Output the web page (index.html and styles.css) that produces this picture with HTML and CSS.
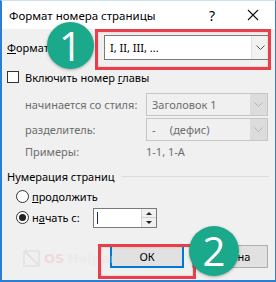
FILE: index.html
```html
<!DOCTYPE html>
<html lang="ru">
<head>
  <meta charset="UTF-8" />
  <title>Формат номера страницы</title>
  <link rel="stylesheet" href="styles.css">
</head>
<body>
  <div class="dialog">
    <div class="titlebar">
      <span class="title">Формат номера страницы</span>
      <span class="help">?</span>
      <svg class="close" width="12" height="12" viewBox="0 0 12 12">
        <path d="M1 1 L11 11 M11 1 L1 11" stroke="#111" stroke-width="1.1" fill="none"/>
      </svg>
    </div>

    <div class="content">
      <div class="format-row">
        <span class="label"><u>Ф</u>ормат:</span>
        <div class="combo">
          <span class="combo-text">I, II, III, ...</span>
          <span class="arrow">
            <svg width="9" height="6" viewBox="0 0 9 6"><path d="M0.5 0.5 L4.5 4.5 L8.5 0.5" stroke="#555" fill="none"/></svg>
          </span>
        </div>
      </div>

      <div class="check-row">
        <span class="check"></span>
        <span>Включить номер <u>г</u>лавы</span>
      </div>

      <div class="chapter">
        <span>начинается со стиля:</span>
        <div class="combo disabled">
          <span class="combo-text">Заголовок 1</span>
          <span class="arrow">
            <svg width="9" height="6" viewBox="0 0 9 6"><path d="M0.5 0.5 L4.5 4.5 L8.5 0.5" stroke="#b5b5b5" fill="none"/></svg>
          </span>
        </div>
        <span>разделитель:</span>
        <div class="combo disabled">
          <span class="combo-text">-&nbsp;&nbsp;&nbsp;&nbsp;&nbsp;(дефис)</span>
          <span class="arrow">
            <svg width="9" height="6" viewBox="0 0 9 6"><path d="M0.5 0.5 L4.5 4.5 L8.5 0.5" stroke="#b5b5b5" fill="none"/></svg>
          </span>
        </div>
        <span>Примеры:</span>
        <span class="example">1-1, 1-А</span>
      </div>

      <div class="group-title">
        <span>Нумерация страниц</span>
        <span class="group-line"></span>
      </div>

      <div class="radio-row">
        <span class="radio"></span>
        <span><u>п</u>родолжить</span>
      </div>
      <div class="radio-row start">
        <span class="radio checked"></span>
        <span class="start-label">н<u>а</u>чать с:</span>
        <div class="spin">
          <span class="caret"></span>
          <span class="spin-buttons">
            <span class="spin-up"></span>
            <span class="spin-down"></span>
          </span>
        </div>
      </div>

      <div class="buttons">
        <div class="btn default">ОК</div>
        <div class="btn">Отмена</div>
      </div>
    </div>

    <div class="watermark">
      <span class="wm-box"></span>
      <span class="wm-os">OS</span><span class="wm-helper">Helper</span>
    </div>

    <div class="highlight hl-format"></div>
    <div class="highlight hl-ok"></div>
    <div class="badge badge-1">1</div>
    <div class="badge badge-2">2</div>
  </div>
</body>
</html>
```

FILE: styles.css
```css
* {
  margin: 0;
  padding: 0;
  box-sizing: border-box;
}

body {
  font-family: 'Noto Sans', 'Liberation Sans', sans-serif;
  font-size: 11px;
  color: #000;
  background: #fff;
}

.dialog {
  position: relative;
  width: 276px;
  height: 282px;
  background: #f0f0f0;
  border: 1px solid #2a7fd4;
  border-left-width: 2px;
  border-bottom-width: 2px;
  border-top-color: #cfe0f2;
  overflow: hidden;
}

.titlebar {
  height: 28px;
  background: #fff;
  display: flex;
  align-items: center;
  padding-left: 7px;
}

.title {
  flex: 1;
  font-size: 11.5px;
}

.help {
  font-size: 14px;
  margin-right: 32px;
}

.close {
  margin-right: 16px;
}

.content {
  padding: 6px 6px 0 5px;
}

.format-row {
  display: flex;
  align-items: center;
  height: 25px;
}

.label {
  flex: 1;
  white-space: nowrap;
}

.combo {
  display: flex;
  align-items: center;
  width: 165px;
  height: 25px;
  background: #fff;
  border: 1px solid #7a7a7a;
  padding-left: 5px;
}

.combo-text {
  flex: 1;
  white-space: nowrap;
}

.arrow {
  width: 17px;
  height: 100%;
  display: flex;
  align-items: center;
  justify-content: center;
  background: #f2f2f2;
  border-left: 1px solid #e0e0e0;
}

.check-row {
  display: flex;
  align-items: center;
  margin-top: 10px;
  height: 14px;
}

.check {
  width: 12px;
  height: 12px;
  border: 1px solid #333;
  background: #fff;
  margin-right: 6px;
}

.chapter {
  display: grid;
  grid-template-columns: 121px 122px;
  grid-template-rows: 23px 23px 16px;
  row-gap: 2px;
  align-items: center;
  padding-left: 18px;
  margin-top: 9px;
  color: #6d6d6d;
  white-space: nowrap;
}

.combo.disabled {
  width: 122px;
  height: 23px;
  background: #f0f0f0;
  border-color: #c6c6c6;
  color: #6d6d6d;
}

.combo.disabled .arrow {
  background: #dcdcdc;
  border-left: none;
}

.group-title {
  display: flex;
  align-items: center;
  margin-top: 9px;
  height: 16px;
}

.group-line {
  flex: 1;
  height: 1px;
  background: #dcdcdc;
  margin-left: 6px;
}

.radio-row {
  display: flex;
  align-items: center;
  height: 16px;
  margin-top: 4px;
  padding-left: 9px;
}

.radio {
  width: 13px;
  height: 13px;
  border-radius: 50%;
  border: 1px solid #333;
  background: #fff;
  margin-right: 3px;
  display: flex;
  align-items: center;
  justify-content: center;
}

.radio.checked::after {
  content: "";
  width: 7px;
  height: 7px;
  border-radius: 50%;
  background: #222;
}

.radio-row.start {
  height: 21px;
  margin-top: 3px;
}

.start-label {
  width: 61px;
}

.spin {
  display: flex;
  width: 64px;
  height: 20px;
  background: #fff;
  border: 1px solid #7a7a7a;
}

.caret {
  width: 1px;
  height: 12px;
  background: #0c2a7a;
  margin: 3px 0 0 3px;
}

.spin-buttons {
  margin-left: auto;
  width: 15px;
  display: flex;
  flex-direction: column;
  border-left: 1px solid #d0d0d0;
}

.spin-up, .spin-down {
  flex: 1;
  background: #f0f0f0;
  position: relative;
}

.spin-up {
  border-bottom: 1px solid #d0d0d0;
}

.spin-up::after, .spin-down::after {
  content: "";
  position: absolute;
  left: 4px;
  top: 3px;
  border-left: 3px solid transparent;
  border-right: 3px solid transparent;
}

.spin-up::after {
  border-bottom: 3px solid #222;
}

.spin-down::after {
  border-top: 3px solid #222;
}

.buttons {
  display: flex;
  justify-content: flex-end;
  gap: 8px;
  margin-top: 17px;
  padding-right: 1px;
}

.btn {
  width: 76px;
  height: 23px;
  background: #e1e1e1;
  border: 1px solid #adadad;
  display: flex;
  align-items: center;
  justify-content: center;
}

.btn.default {
  width: 74px;
  border: 2px solid #0078d7;
}

.watermark {
  position: absolute;
  left: 21px;
  top: 249px;
  display: flex;
  align-items: center;
  font-family: 'DejaVu Sans', sans-serif;
  font-weight: bold;
  font-size: 13px;
  opacity: 0.4;
}

.wm-box {
  width: 17px;
  height: 17px;
  border: 2px solid #d6d6d6;
  margin-right: 4px;
  background: linear-gradient(45deg, transparent 46%, #c8c8c8 47%, #c8c8c8 55%, transparent 56%);
}

.wm-os {
  color: #f0b9c0;
  margin-right: 3px;
}

.wm-helper {
  color: #e6e6e6;
}

.highlight {
  position: absolute;
  border: 3px solid #e5404b;
  box-shadow: inset 0 0 2px rgba(229, 64, 75, 0.4);
}

.hl-format {
  left: 93px;
  top: 28px;
  width: 176px;
  height: 41px;
}

.hl-ok {
  left: 96px;
  top: 243px;
  width: 98px;
  height: 35px;
}

.badge {
  position: absolute;
  width: 47px;
  height: 47px;
  border-radius: 50%;
  background: #1ba98c;
  color: #fff;
  font-family: 'Open Sans', sans-serif;
  font-size: 40px;
  line-height: 47px;
  text-align: center;
  box-shadow: 0 1px 3px rgba(0, 0, 0, 0.3);
}

.badge-1 {
  left: 45px;
  top: 21px;
}

.badge-2 {
  left: 187px;
  top: 225px;
  width: 50px;
  height: 50px;
  line-height: 50px;
}
```
